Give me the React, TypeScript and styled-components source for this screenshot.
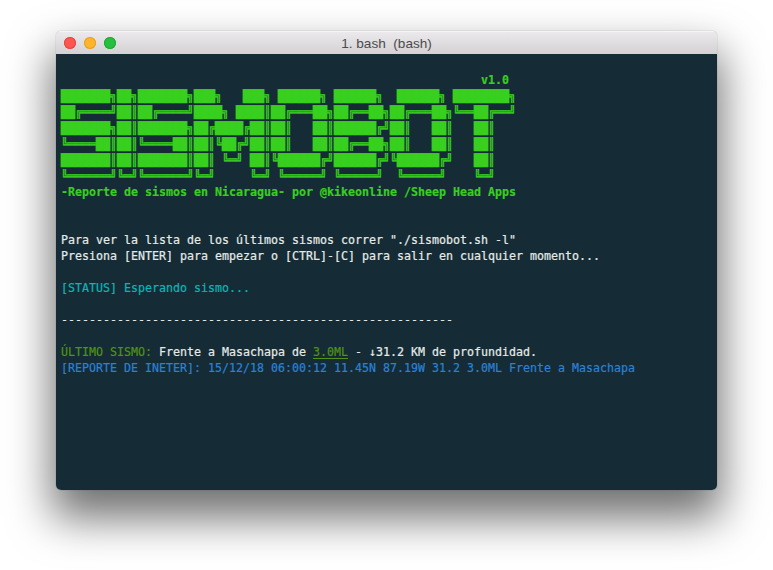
import React from "react";
import styled, { createGlobalStyle } from "styled-components";

const Global = createGlobalStyle`
  html, body { margin: 0; padding: 0; background: #fff; }
  body { width: 773px; height: 570px; overflow: hidden; }
`;

const Page = styled.div`
  width: 773px;
  height: 570px;
  padding: 31px 0 0 56px;
  box-sizing: border-box;
`;

const Window = styled.div`
  width: 661px;
  height: 459px;
  border-radius: 5px;
  overflow: hidden;
  display: flex;
  flex-direction: column;
  box-shadow: 0 24px 44px 4px rgba(0, 0, 0, 0.56), 0 0 1px rgba(0, 0, 0, 0.5);
`;

const TitleBar = styled.header`
  position: relative;
  flex: 0 0 23px;
  display: flex;
  align-items: center;
  justify-content: center;
  background: linear-gradient(#ebe9eb, #d3d1d3);
  border-top: 1px solid #f6f5f6;
  box-sizing: border-box;
`;

const Lights = styled.div`
  position: absolute;
  left: 8px;
  top: 5px;
  display: flex;
  gap: 8px;
`;

const Light = styled.span<{ $color: string; $edge: string }>`
  width: 12px;
  height: 12px;
  border-radius: 50%;
  background: ${(p) => p.$color};
  box-shadow: inset 0 0 0 1px ${(p) => p.$edge};
`;

const Title = styled.div`
  font: 13.6px "Liberation Sans", Arial, sans-serif;
  color: #4b4b4b;
  white-space: pre;
`;

const Terminal = styled.main`
  flex: 1;
  background: #152b36;
  padding: 2px 0 0 5px;
  font-family: "DejaVu Sans Mono", monospace;
  font-size: 11.63px;
  color: #e6ebe8;
  -webkit-text-stroke: 0.2px currentColor;
`;

const Line = styled.div<{ $color?: string; $bold?: boolean }>`
  height: 16px;
  line-height: 16px;
  white-space: pre;
  color: ${(p) => p.$color ?? "inherit"};
  font-weight: ${(p) => (p.$bold ? 700 : 400)};
`;

const ArtLine = styled(Line)`
  -webkit-text-stroke: 0.4px currentColor;
`;

const Tint = styled.span<{ $color: string }>`
  color: ${(p) => p.$color};
`;

const Magnitude = styled.span`
  color: #4f9414;
  text-decoration: underline;
  text-underline-offset: 2px;
`;

const GREEN = "#39cf1f";
const CYAN = "#06b8ba";
const BLUE = "#2a82d6";
const OLIVE = "#4f9414";

const art = [
  "███████╗██╗███████╗███╗   ███╗ ██████╗ ██████╗  ██████╗ ████████╗",
  "██╔════╝██║██╔════╝████╗ ████║██╔═══██╗██╔══██╗██╔═══██╗╚══██╔══╝",
  "███████╗██║███████╗██╔████╔██║██║   ██║██████╔╝██║   ██║   ██║   ",
  "╚════██║██║╚════██║██║╚██╔╝██║██║   ██║██╔══██╗██║   ██║   ██║   ",
  "███████║██║███████║██║ ╚═╝ ██║╚██████╔╝██████╔╝╚██████╔╝   ██║   ",
  "╚══════╝╚═╝╚══════╝╚═╝     ╚═╝ ╚═════╝ ╚═════╝  ╚═════╝    ╚═╝   ",
];

export default function App() {
  return (
    <Page>
      <Global />
      <Window>
        <TitleBar>
          <Lights>
            <Light $color="#fc5650" $edge="#e5443f" />
            <Light $color="#fdb52b" $edge="#e59f22" />
            <Light $color="#28bf3f" $edge="#20a834" />
          </Lights>
          <Title>1. bash  (bash)</Title>
        </TitleBar>
        <Terminal>
          <Line />
          <Line $color={GREEN} $bold>{" ".repeat(60)}v1.0</Line>
          {art.map((row) => (
            <ArtLine key={row} $color={GREEN} $bold>{row}</ArtLine>
          ))}
          <Line $color={GREEN} $bold>-Reporte de sismos en Nicaragua- por @kikeonline /Sheep Head Apps</Line>
          <Line />
          <Line />
          <Line>Para ver la lista de los últimos sismos correr "./sismobot.sh -l"</Line>
          <Line>Presiona [ENTER] para empezar o [CTRL]-[C] para salir en cualquier momento...</Line>
          <Line />
          <Line $color={CYAN}>[STATUS] Esperando sismo...</Line>
          <Line />
          <Line>{"-".repeat(56)}</Line>
          <Line />
          <Line>
            <Tint $color={OLIVE}>ÚLTIMO SISMO:</Tint> Frente a Masachapa de <Magnitude>3.0ML</Magnitude> - ↓31.2 KM de profundidad.
          </Line>
          <Line $color={BLUE}>[REPORTE DE INETER]: 15/12/18 06:00:12 11.45N 87.19W 31.2 3.0ML Frente a Masachapa</Line>
        </Terminal>
      </Window>
    </Page>
  );
}
